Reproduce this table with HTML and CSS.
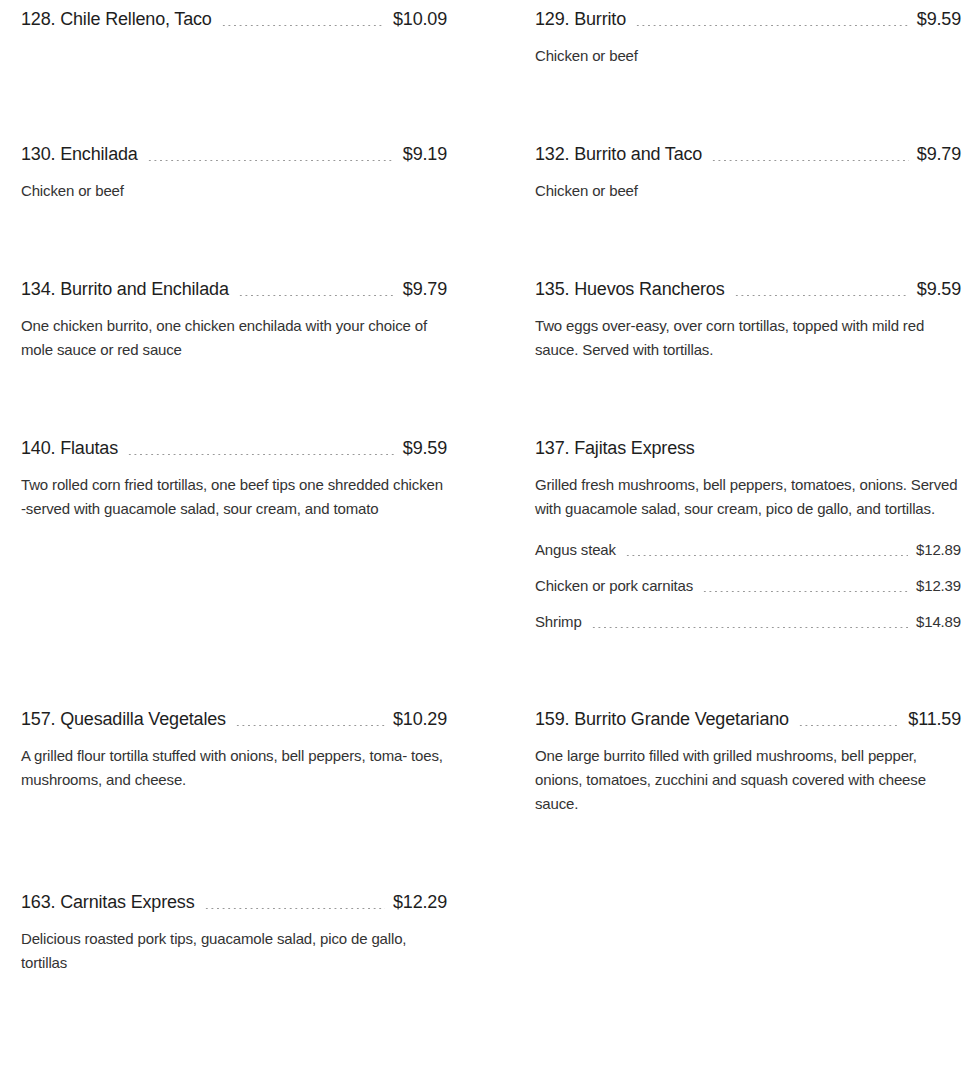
FILE: index.html
```html
<!DOCTYPE html>
<html>
<head>
<meta charset="utf-8">
<link rel="stylesheet" href="styles.css">
</head>
<body>
<div class="menu">
  <div class="item">
    <div class="head"><span class="name">128. Chile Relleno, Taco</span><span class="dots"></span><span class="price">$10.09</span></div>
  </div>
  <div class="item">
    <div class="head"><span class="name">129. Burrito</span><span class="dots"></span><span class="price">$9.59</span></div>
    <p class="desc">Chicken or beef</p>
  </div>
  <div class="item">
    <div class="head"><span class="name">130. Enchilada</span><span class="dots"></span><span class="price">$9.19</span></div>
    <p class="desc">Chicken or beef</p>
  </div>
  <div class="item">
    <div class="head"><span class="name">132. Burrito and Taco</span><span class="dots"></span><span class="price">$9.79</span></div>
    <p class="desc">Chicken or beef</p>
  </div>
  <div class="item">
    <div class="head"><span class="name">134. Burrito and Enchilada</span><span class="dots"></span><span class="price">$9.79</span></div>
    <p class="desc">One chicken burrito, one chicken enchilada with your choice of mole sauce or red sauce</p>
  </div>
  <div class="item">
    <div class="head"><span class="name">135. Huevos Rancheros</span><span class="dots"></span><span class="price">$9.59</span></div>
    <p class="desc">Two eggs over-easy, over corn tortillas, topped with mild red sauce. Served with tortillas.</p>
  </div>
  <div class="item">
    <div class="head"><span class="name">140. Flautas</span><span class="dots"></span><span class="price">$9.59</span></div>
    <p class="desc">Two rolled corn fried tortillas, one beef tips one shredded chicken -served with guacamole salad, sour cream, and tomato</p>
  </div>
  <div class="item">
    <div class="head"><span class="name">137. Fajitas Express</span></div>
    <p class="desc">Grilled fresh mushrooms, bell peppers, tomatoes, onions. Served with guacamole salad, sour cream, pico de gallo, and tortillas.</p>
    <ul class="options">
      <li class="option"><span class="oname">Angus steak</span><span class="dots"></span><span class="oprice">$12.89</span></li>
      <li class="option"><span class="oname">Chicken or pork carnitas</span><span class="dots"></span><span class="oprice">$12.39</span></li>
      <li class="option"><span class="oname">Shrimp</span><span class="dots"></span><span class="oprice">$14.89</span></li>
    </ul>
  </div>
  <div class="item">
    <div class="head"><span class="name">157. Quesadilla Vegetales</span><span class="dots"></span><span class="price">$10.29</span></div>
    <p class="desc">A grilled flour tortilla stuffed with onions, bell peppers, toma- toes, mushrooms, and cheese.</p>
  </div>
  <div class="item">
    <div class="head"><span class="name">159. Burrito Grande Vegetariano</span><span class="dots"></span><span class="price">$11.59</span></div>
    <p class="desc">One large burrito filled with grilled mushrooms, bell pepper, onions, tomatoes, zucchini and squash covered with cheese sauce.</p>
  </div>
  <div class="item">
    <div class="head"><span class="name">163. Carnitas Express</span><span class="dots"></span><span class="price">$12.29</span></div>
    <p class="desc">Delicious roasted pork tips, guacamole salad, pico de gallo, tortillas</p>
  </div>
</div>
</body>
</html>
```

FILE: styles.css
```css
html, body {
  margin: 0;
  padding: 0;
  background: #ffffff;
}
body {
  font-family: "Liberation Sans", Arial, sans-serif;
  color: #222222;
}
.menu {
  display: grid;
  grid-template-columns: 426px 426px;
  column-gap: 88px;
  row-gap: 74px;
  padding: 7px 0 0 21px;
}
.head {
  display: flex;
  align-items: baseline;
  font-size: 18px;
  line-height: 24px;
  letter-spacing: -0.17px;
  color: #1e1e1e;
}
.name, .price, .oname, .oprice {
  white-space: nowrap;
}
.dots {
  flex: 1;
  align-self: stretch;
  margin: 0 8px 0 9px;
  background-image: radial-gradient(circle, #999999 0.65px, rgba(255,255,255,0) 1.05px);
  background-size: 5.6px 3px;
  background-repeat: repeat-x;
  background-position: left 17px;
}
.desc {
  margin: 13px 0 0 0;
  font-size: 15px;
  line-height: 24px;
  letter-spacing: -0.15px;
  color: #333333;
}
.options {
  list-style: none;
  margin: 17px 0 -1px 0;
  padding: 0;
  display: flex;
  flex-direction: column;
  gap: 12px;
}
.option {
  display: flex;
  align-items: baseline;
  font-size: 15px;
  line-height: 24px;
  letter-spacing: -0.15px;
  color: #333333;
}
.option .dots {
  background-position: left 16px;
}
```
